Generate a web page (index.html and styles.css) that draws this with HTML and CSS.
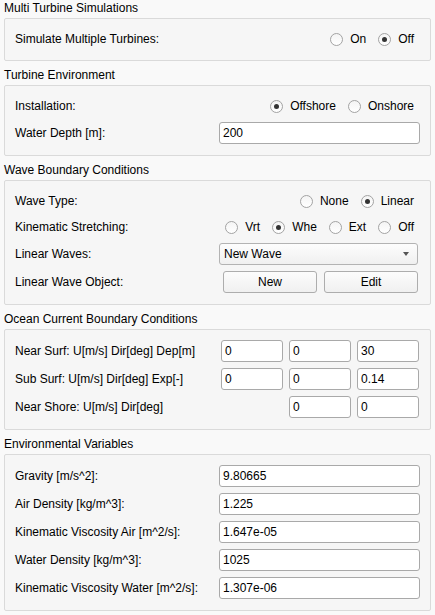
FILE: index.html
```html
<!DOCTYPE html>
<html>
<head>
<meta charset="utf-8">
<link rel="stylesheet" href="styles.css">
</head>
<body>
<div class="page">

  <section class="group">
    <div class="group-title">Multi Turbine Simulations</div>
    <div class="box">
      <span class="label">Simulate Multiple Turbines:</span>
      <div class="radios">
        <label class="radio"><span class="dot"></span>On</label>
        <label class="radio"><span class="dot on"></span>Off</label>
      </div>
    </div>
  </section>

  <section class="group">
    <div class="group-title">Turbine Environment</div>
    <div class="box">
      <span class="label">Installation:</span>
      <div class="radios">
        <label class="radio"><span class="dot on"></span>Offshore</label>
        <label class="radio"><span class="dot"></span>Onshore</label>
      </div>
      <span class="label">Water Depth [m]:</span>
      <div class="input">200</div>
    </div>
  </section>

  <section class="group">
    <div class="group-title">Wave Boundary Conditions</div>
    <div class="box">
      <span class="label">Wave Type:</span>
      <div class="radios">
        <label class="radio"><span class="dot"></span>None</label>
        <label class="radio"><span class="dot on"></span>Linear</label>
      </div>
      <span class="label">Kinematic Stretching:</span>
      <div class="radios">
        <label class="radio"><span class="dot"></span>Vrt</label>
        <label class="radio"><span class="dot on"></span>Whe</label>
        <label class="radio"><span class="dot"></span>Ext</label>
        <label class="radio"><span class="dot"></span>Off</label>
      </div>
      <span class="label">Linear Waves:</span>
      <div class="combo"><span>New Wave</span><span class="arrow"></span></div>
      <span class="label">Linear Wave Object:</span>
      <div class="buttons">
        <div class="button">New</div>
        <div class="button">Edit</div>
      </div>
    </div>
  </section>

  <section class="group">
    <div class="group-title">Ocean Current Boundary Conditions</div>
    <div class="box box-current">
      <span class="label">Near Surf: U[m/s] Dir[deg] Dep[m]</span>
      <div class="input">0</div>
      <div class="input">0</div>
      <div class="input">30</div>
      <span class="label">Sub Surf: U[m/s] Dir[deg] Exp[-]</span>
      <div class="input">0</div>
      <div class="input">0</div>
      <div class="input">0.14</div>
      <span class="label">Near Shore: U[m/s] Dir[deg]</span>
      <span></span>
      <div class="input">0</div>
      <div class="input">0</div>
    </div>
  </section>

  <section class="group">
    <div class="group-title">Environmental Variables</div>
    <div class="box">
      <span class="label">Gravity [m/s^2]:</span>
      <div class="input">9.80665</div>
      <span class="label">Air Density [kg/m^3]:</span>
      <div class="input">1.225</div>
      <span class="label">Kinematic Viscosity Air [m^2/s]:</span>
      <div class="input">1.647e-05</div>
      <span class="label">Water Density [kg/m^3]:</span>
      <div class="input">1025</div>
      <span class="label">Kinematic Viscosity Water [m^2/s]:</span>
      <div class="input">1.307e-06</div>
    </div>
  </section>

</div>
</body>
</html>
```

FILE: styles.css
```css
html, body {
  margin: 0;
  padding: 0;
  background: #f9f9f9;
}

body {
  font-family: "Liberation Sans", Arial, sans-serif;
  font-size: 12px;
  color: #000;
}

.page {
  width: 427px;
  padding: 0 4px;
  display: flex;
  flex-direction: column;
  gap: 6px;
}

.group-title {
  line-height: 16px;
  height: 16px;
  margin-bottom: 2px;
  white-space: nowrap;
}

.box {
  border: 1px solid #dadada;
  border-radius: 2px;
  background: #f6f6f6;
  padding: 10px 10px 11px;
  display: grid;
  grid-template-columns: 204px 201px;
  row-gap: 6px;
  align-items: center;
}

.box-current {
  grid-template-columns: 200px 62px 62px 62px;
  column-gap: 6px;
}

.label {
  white-space: nowrap;
  line-height: 20px;
}

.radios {
  display: flex;
  justify-content: flex-end;
  align-items: center;
  gap: 12px;
  height: 20px;
  margin-right: 6px;
}

.radio {
  display: flex;
  align-items: center;
  gap: 7px;
  white-space: nowrap;
}

.dot {
  width: 11px;
  height: 11px;
  border: 1px solid #a3a3a3;
  border-radius: 50%;
  background: linear-gradient(#f4f4f4, #ffffff);
  position: relative;
  flex: none;
}

.dot.on::after {
  content: "";
  position: absolute;
  left: 3px;
  top: 3px;
  width: 5px;
  height: 5px;
  border-radius: 50%;
  background: #333;
}

.input {
  height: 20px;
  line-height: 20px;
  border: 1px solid #a9a9a9;
  border-radius: 3px;
  background: #fff;
  padding: 0 3px;
  white-space: nowrap;
  overflow: hidden;
}

.combo {
  height: 20px;
  border: 1px solid #b3b3b3;
  border-radius: 3px;
  background: linear-gradient(#fdfdfd, #f0f0f0);
  padding: 0 3px 0 4px;
  display: flex;
  align-items: center;
  justify-content: space-between;
  margin-right: 2px;
}

.arrow {
  width: 0;
  height: 0;
  border-left: 3.5px solid transparent;
  border-right: 3.5px solid transparent;
  border-top: 4px solid #555;
  margin-right: 5px;
}

.buttons {
  display: grid;
  grid-template-columns: 1fr 1fr;
  gap: 7px;
  padding: 0 2px 0 4px;
}

.button {
  height: 20px;
  line-height: 20px;
  border: 1px solid #adadad;
  border-radius: 3px;
  background: linear-gradient(#fcfcfc, #f0f0f0);
  text-align: center;
}
```
